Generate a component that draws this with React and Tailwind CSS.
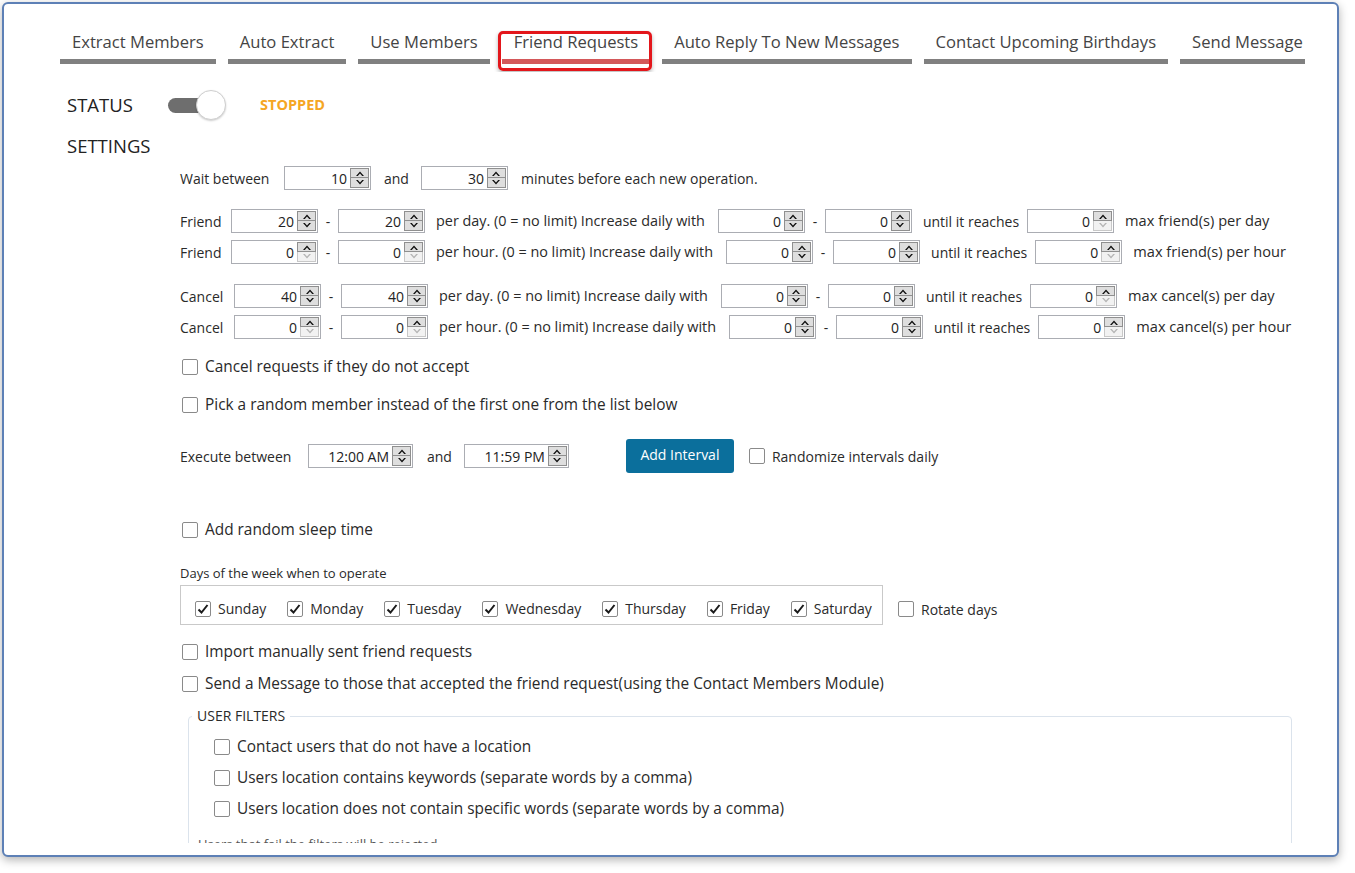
import React from 'react';

const font = { fontFamily: '"Open Sans", "Noto Sans", sans-serif' };

const tabs = [
  'Extract Members',
  'Auto Extract',
  'Use Members',
  'Friend Requests',
  'Auto Reply To New Messages',
  'Contact Upcoming Birthdays',
  'Send Message',
];

const Arrow = ({ up, disabled }) => (
  <svg width="10" height="7" viewBox="0 0 10 7">
    <path
      d={up ? 'M1 6 L5 1.5 L9 6 L7.2 6 L5 3.6 L2.8 6 Z' : 'M1 1 L5 5.5 L9 1 L7.2 1 L5 3.4 L2.8 1 Z'}
      fill={disabled ? '#b5b5b5' : '#111'}
    />
  </svg>
);

const Spinner = ({ value, wide, downOff }) => (
  <div
    className={`flex h-[24px] shrink-0 items-center border border-[#abadb3] bg-white ${wide ? 'w-[105px]' : 'w-[87px]'}`}
  >
    <span className="flex-1 pr-[3px] text-right text-[14px] text-[#222]">{value}</span>
    <div className="mr-[1px] flex h-[20px] w-[19px] flex-col">
      <div className="flex h-[10px] items-center justify-center border border-[#8f8f8f] bg-[#dedede]">
        <Arrow up />
      </div>
      <div
        className={`flex h-[10px] items-center justify-center border border-t-0 ${
          downOff ? 'border-[#c8c8c8] bg-[#f2f2f2]' : 'border-[#8f8f8f] bg-[#dedede]'
        }`}
      >
        <Arrow disabled={downOff} />
      </div>
    </div>
  </div>
);

const Check = ({ checked }) => (
  <span className="flex h-[16px] w-[16px] shrink-0 items-center justify-center rounded-[2px] border border-[#8a8a8a] bg-white">
    {checked && (
      <svg width="12" height="12" viewBox="0 0 12 12">
        <path d="M1.5 6.5 L4.5 9.5 L10.5 2" fill="none" stroke="#1a1a1a" strokeWidth="2" />
      </svg>
    )}
  </span>
);

const CheckRow = ({ label, checked, small, className = '' }) => (
  <div className={`flex h-[24px] items-center gap-[7px] ${className}`}>
    <Check checked={checked} />
    <span className={`${small ? 'text-[14px]' : 'text-[15.4px]'} text-[#2a2a2a]`}>{label}</span>
  </div>
);

const LimitRow = ({ label, a, b, mid, inc, until, max, maxText, lowOff, className = '' }) => (
  <div className={`flex h-[24px] items-center text-[14px] text-[#2a2a2a] ${className}`}>
    <span className={label === 'Friend' ? 'w-[51px]' : 'w-[54px]'}>{label}</span>
    <Spinner value={a} downOff={lowOff} />
    <span className="w-[20px] text-center">-</span>
    <Spinner value={b} downOff={lowOff} />
    <span className="ml-[11px] mr-[13px] text-[14.4px]">{mid}</span>
    <Spinner value={inc} />
    <span className="w-[20px] text-center">-</span>
    <Spinner value={inc} />
    <span className="ml-[11px] mr-[8px]">{until}</span>
    <Spinner value={max} downOff />
    <span className="ml-[11px] text-[14.6px]">{maxText}</span>
  </div>
);

const days = ['Sunday', 'Monday', 'Tuesday', 'Wednesday', 'Thursday', 'Friday', 'Saturday'];

export default function App() {
  return (
    <div className="h-[873px] w-[1355px] overflow-hidden bg-white" style={font}>
      <div className="ml-[2px] mt-[2px] h-[855px] w-[1337px] overflow-hidden rounded-[6px] border-2 border-[#5d80b6] bg-white shadow-[0_3px_10px_rgba(0,0,0,0.3)]">
        <div className="h-[839px] overflow-hidden">
          {/* tabs */}
          <div className="ml-[56px] mt-[26px] flex w-[1245px] gap-[12px] overflow-hidden pb-[8px]">
            {tabs.map((t) => (
              <div key={t} className="relative flex shrink-0 flex-col">
                <span className="px-[12px] text-[16.6px] leading-[24px] text-[#444]">{t}</span>
                <div className={`mt-[5px] h-[5px] ${t === 'Friend Requests' ? 'bg-[#d4585a]' : 'bg-[#808080]'}`} />
                {t === 'Friend Requests' && (
                  <div className="absolute bottom-[-7px] left-[-4px] right-[-2px] top-[1px] rounded-[5px] border-[3px] border-[#e3161b] shadow-[0_2px_4px_rgba(0,0,0,0.3)]" />
                )}
              </div>
            ))}
          </div>

          {/* status */}
          <div className="ml-[63px] mt-[18px] flex h-[30px] items-center">
            <span className="w-[101px] text-[18.5px] text-[#222]">STATUS</span>
            <div className="relative h-[30px] w-[60px]">
              <div className="absolute left-0 top-[8px] h-[15px] w-[40px] rounded-full bg-[#6e6e6e]" />
              <div className="absolute left-[28px] top-0 h-[30px] w-[30px] rounded-full border border-[#cfcfcf] bg-white shadow-[0_1px_2px_rgba(0,0,0,0.2)]" />
            </div>
            <span className="ml-[32px] text-[14.5px] font-bold text-[#f5a623]">STOPPED</span>
          </div>

          <div className="ml-[63px] mt-[14px] flex h-[24px] items-center text-[18.5px] text-[#222]">SETTINGS</div>

          {/* settings body */}
          <div className="ml-[176px] flex flex-col">
            <div className="mt-[8px] flex h-[24px] items-center text-[14px] text-[#2a2a2a]">
              <span className="w-[104px]">Wait between</span>
              <Spinner value="10" />
              <span className="ml-[13px] mr-[12px]">and</span>
              <Spinner value="30" />
              <span className="ml-[13px]">minutes before each new operation.</span>
            </div>

            <LimitRow className="mt-[19px]" label="Friend" a="20" b="20" mid="per day. (0 = no limit) Increase daily with" inc="0" until="until it reaches" max="0" maxText="max friend(s) per day" />
            <LimitRow className="mt-[7px]" label="Friend" a="0" b="0" lowOff mid="per hour. (0 = no limit) Increase daily with" inc="0" until="until it reaches" max="0" maxText="max friend(s) per hour" />
            <LimitRow className="mt-[20px]" label="Cancel" a="40" b="40" mid="per day. (0 = no limit) Increase daily with" inc="0" until="until it reaches" max="0" maxText="max cancel(s) per day" />
            <LimitRow className="mt-[7px]" label="Cancel" a="0" b="0" lowOff mid="per hour. (0 = no limit) Increase daily with" inc="0" until="until it reaches" max="0" maxText="max cancel(s) per hour" />

            <CheckRow className="ml-[2px] mt-[16px]" label="Cancel requests if they do not accept" />
            <CheckRow className="ml-[2px] mt-[14px]" label="Pick a random member instead of the first one from the list below" />

            <div className="mt-[22px] flex h-[34px] items-center text-[14px] text-[#2a2a2a]">
              <span className="w-[128px]">Execute between</span>
              <Spinner value="12:00 AM" wide />
              <span className="ml-[14px] mr-[12px]">and</span>
              <Spinner value="11:59 PM" wide />
              <button className="ml-[57px] h-[34px] w-[108px] rounded-[3px] bg-[#0b6f9c] pb-[4px] text-[14px] text-white">
                Add Interval
              </button>
              <CheckRow className="ml-[15px]" small label="Randomize intervals daily" />
            </div>

            <CheckRow className="ml-[2px] mt-[45px]" label="Add random sleep time" />

            <div className="mt-[22px] flex h-[20px] items-center text-[13px] text-[#2a2a2a]">Days of the week when to operate</div>
            <div className="mt-[1px] flex items-start">
              <div className="flex h-[40px] w-[703px] items-center gap-[21px] border border-[#c9c9c9] pl-[14px] pt-[7px]">
                {days.map((d) => (
                  <div key={d} className="flex items-center gap-[7px]">
                    <Check checked />
                    <span className="text-[14px] text-[#2a2a2a]">{d}</span>
                  </div>
                ))}
              </div>
              <CheckRow className="ml-[15px] mt-[12px]" small label="Rotate days" />
            </div>

            <CheckRow className="ml-[2px] mt-[15px]" label="Import manually sent friend requests" />
            <CheckRow className="ml-[2px] mt-[8px]" label="Send a Message to those that accepted the friend request(using the Contact Members Module)" />

            <fieldset className="ml-[8px] mt-[10px] w-[1104px] rounded-[4px] border border-[#dbe3ec] p-0 pb-[20px]">
              <legend className="ml-[3px] px-[5px] text-[14px] leading-[20px] text-[#2a2a2a]">USER FILTERS</legend>
              <div className="flex flex-col pl-[25px]">
                <CheckRow className="mt-[9px]" label="Contact users that do not have a location" />
                <CheckRow className="mt-[7px]" label="Users location contains keywords (separate words by a comma)" />
                <CheckRow className="mt-[7px]" label="Users location does not contain specific words (separate words by a comma)" />
                <div className="-ml-[16px] mt-[14px] text-[13px] text-[#555]">Users that fail the filters will be rejected</div>
              </div>
            </fieldset>
          </div>
        </div>
      </div>
    </div>
  );
}
